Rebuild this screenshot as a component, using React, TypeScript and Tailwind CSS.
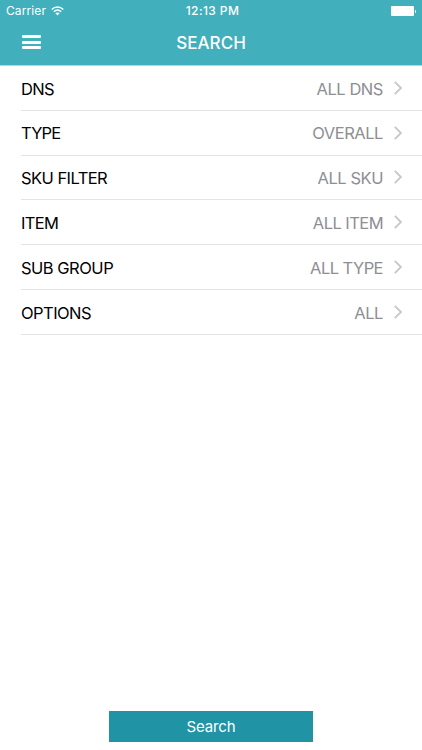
const rows = [
  { label: "DNS", value: "ALL DNS", labelFit: "tracking-[-0.65px]", valueFit: "tracking-[-0.45px]" },
  { label: "TYPE", value: "OVERALL", labelFit: "tracking-[-0.8px]", valueFit: "tracking-[-0.45px]" },
  { label: "SKU FILTER", value: "ALL SKU", labelFit: "tracking-[-0.55px]", valueFit: "tracking-[-0.45px]" },
  { label: "ITEM", value: "ALL ITEM", labelFit: "tracking-[-0.7px]", valueFit: "tracking-[-0.55px]" },
  { label: "SUB GROUP", value: "ALL TYPE", labelFit: "tracking-[-0.5px]", valueFit: "tracking-[-0.55px]" },
  { label: "OPTIONS", value: "ALL", labelFit: "tracking-[-0.55px]", valueFit: "tracking-[-0.4px]" },
];

function StatusBar() {
  return (
    <div className="grid h-[22px] grid-cols-3 items-center pl-[6px] pr-[6px] text-[12px] leading-[22px]">
      <div className="flex items-center gap-[5px]">
        <span className="tracking-[0.1px]">Carrier</span>
        <svg width="13" height="10" viewBox="0 0 13 10" fill="none" stroke="white" strokeWidth="1.5">
          <path d="M0.7 3.5 C4 0.1 9 0.1 12.3 3.5" />
          <path d="M2.8 5.7 C5 3.6 8 3.6 10.2 5.7" />
          <path d="M4.4 7.2 C5.6 6.1 7.4 6.1 8.6 7.2 L6.5 9.4 Z" fill="white" stroke="none" />
        </svg>
      </div>
      <span className="pl-[3px] text-center font-medium tracking-[0.4px]">12:13 PM</span>
      <div className="flex items-center justify-end">
        <span className="h-[10px] w-[23px] rounded-[1px] bg-white" />
        <span className="ml-[0.5px] h-[3px] w-[1.5px] rounded-r-full bg-white" />
      </div>
    </div>
  );
}

export default function App() {
  return (
    <div className="flex h-[750px] w-[422px] flex-col overflow-hidden bg-white font-['Inter',sans-serif]">
      <header className="h-[66px] shrink-0 border-b border-[#9bdfe7] bg-[#41afbc] text-white">
        <StatusBar />
        <div className="grid h-[43px] grid-cols-[80px_1fr_80px] items-center">
          <button className="ml-[22px] flex w-[19px] flex-col gap-[2.5px] pb-[3px]" aria-label="Menu">
            <span className="h-[3px] w-full rounded-[1px] bg-white" />
            <span className="h-[3px] w-full rounded-[1px] bg-white" />
            <span className="h-[3px] w-full rounded-[1px] bg-white" />
          </button>
          <h1 className="text-center text-[17px] font-medium tracking-[0.05px]">SEARCH</h1>
        </div>
      </header>
      <main className="flex flex-1 flex-col">
        {rows.map((row) => (
          <div key={row.label} className="ml-[21px] flex h-[44.8px] items-center justify-between border-b border-[#e4e4e6] pt-[2px] pr-[20px] text-[16.5px]">
            <span className={`text-black ${row.labelFit}`}>{row.label}</span>
            <div className="flex items-center gap-[11px]">
              <span className={`text-[#8e8e93] ${row.valueFit}`}>{row.value}</span>
              <svg width="8" height="14" viewBox="0 0 8 14" fill="none" stroke="#c7c7cc" strokeWidth="1.9" className="mb-[2px]">
                <path d="M0.8 0.8 L7 7 L0.8 13.2" />
              </svg>
            </div>
          </div>
        ))}
      </main>
      <footer className="flex h-[39px] justify-center">
        <button className="h-[31px] w-[204px] bg-[#2094a5] text-[15px] leading-[31px] tracking-[-0.15px] text-white">Search</button>
      </footer>
    </div>
  );
}
